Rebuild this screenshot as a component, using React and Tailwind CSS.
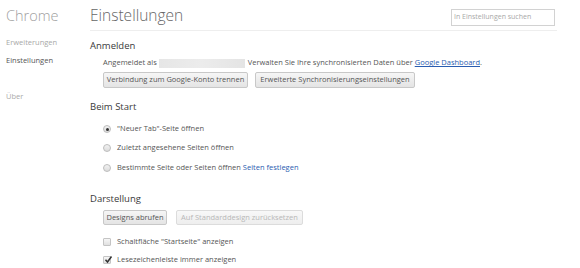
import React from "react";

const font = { fontFamily: '"Open Sans", "Noto Sans", sans-serif' };

function Btn({ children, disabled, className = "" }) {
  return (
    <div
      className={
        "flex items-center justify-center rounded-[2px] border border-[#c8c8c8] bg-gradient-to-b from-[#f6f6f6] to-[#e4e4e4] text-[7.5px] " +
        (disabled ? "text-[#b8b8b8] border-[#dcdcdc] from-[#f8f8f8] to-[#eeeeee] " : "text-[#555] ") +
        className
      }
    >
      {children}
    </div>
  );
}

function Radio({ checked }) {
  return (
    <div className="w-[8px] h-[8px] rounded-full border border-[#bdbdbd] bg-gradient-to-b from-[#f2f2f2] to-[#dcdcdc] flex items-center justify-center">
      {checked && <div className="w-[3px] h-[3px] rounded-full bg-[#333]" />}
    </div>
  );
}

function Check({ checked }) {
  return (
    <div className="relative w-[8px] h-[8px] rounded-[1px] border border-[#c4c4c4] bg-gradient-to-b from-[#f6f6f6] to-[#e0e0e0]">
      {checked && (
        <svg className="absolute left-[0px] top-[-2px]" width="9" height="9" viewBox="0 0 9 9">
          <path d="M1.5 4.8 L3.5 7 L7.5 1.5" fill="none" stroke="#333" strokeWidth="1.5" />
        </svg>
      )}
    </div>
  );
}

export default function App() {
  return (
    <div className="w-[580px] h-[268px] bg-white flex overflow-hidden" style={font}>
      <div className="w-[90px] shrink-0 pl-[6px]">
        <div className="mt-[7px] h-[18px] leading-[18px] text-[14.5px] text-[#a0a0a0] font-light">Chrome</div>
        <div className="mt-[12px] h-[10px] leading-[10px] text-[7.5px] text-[#a8a8a8]">Erweiterungen</div>
        <div className="mt-[8px] h-[10px] leading-[10px] text-[7.5px] text-[#555]">Einstellungen</div>
        <div className="mt-[26px] h-[10px] leading-[10px] text-[7.5px] text-[#aaa]">Über</div>
      </div>
      <div className="flex-1 pr-[23px]">
        <div className="h-[31px] border-b border-[#eeeeee] flex justify-between items-start">
          <div className="mt-[6px] h-[19px] leading-[19px] text-[15.5px] text-[#666] font-light">Einstellungen</div>
          <div className="mt-[9px] mr-[2px] w-[104px] h-[17px] border border-[#d2d2d2] flex items-center pl-[2px] text-[7px] text-[#a8a8a8]">
            In Einstellungen suchen
          </div>
        </div>

        <div className="mt-[9px] h-[12px] leading-[12px] text-[9.5px] text-[#3a3a3a]">Anmelden</div>
        <div className="mt-[6px] h-[10px] pl-[13px] flex items-center text-[7.5px] text-[#555]">
          <span>Angemeldet als</span>
          <div className="ml-[2px] w-[86px] h-[9px] bg-gradient-to-r from-[#e6e6e6] via-[#ececec] to-[#e4e4e4] blur-[0.5px]" />
          <span className="ml-[3px]">
            Verwalten Sie Ihre synchronisierten Daten über{" "}
            <span className="text-[#2a5db0] underline">Google Dashboard</span>.
          </span>
        </div>
        <div className="mt-[4px] h-[16px] pl-[13px] flex gap-[7px]">
          <Btn className="w-[145px] h-[16px]">Verbindung zum Google-Konto trennen</Btn>
          <Btn className="w-[160px] h-[16px]">Erweiterte Synchronisierungseinstellungen</Btn>
        </div>

        <div className="mt-[13px] h-[12px] leading-[12px] text-[9.5px] text-[#3a3a3a]">Beim Start</div>
        <div className="mt-[9px] h-[14px] pl-[13px] flex items-center gap-[6px] text-[7.5px] text-[#555]">
          <Radio checked />
          <span>"Neuer Tab"-Seite öffnen</span>
        </div>
        <div className="mt-[5px] h-[14px] pl-[13px] flex items-center gap-[6px] text-[7.5px] text-[#555]">
          <Radio />
          <span>Zuletzt angesehene Seiten öffnen</span>
        </div>
        <div className="mt-[6px] h-[14px] pl-[13px] flex items-center gap-[6px] text-[7.5px] text-[#555]">
          <Radio />
          <span>
            Bestimmte Seite oder Seiten öffnen <span className="text-[#2a5db0]">Seiten festlegen</span>
          </span>
        </div>

        <div className="mt-[18px] h-[12px] leading-[12px] text-[9.5px] text-[#3a3a3a]">Darstellung</div>
        <div className="mt-[5px] h-[15px] pl-[13px] flex gap-[9px]">
          <Btn className="w-[64px] h-[15px]">Designs abrufen</Btn>
          <Btn disabled className="w-[127px] h-[15px]">Auf Standarddesign zurücksetzen</Btn>
        </div>
        <div className="mt-[10px] h-[14px] pl-[13px] flex items-center gap-[6px] text-[7.5px] text-[#555]">
          <Check />
          <span>Schaltfläche "Startseite" anzeigen</span>
        </div>
        <div className="mt-[4px] h-[14px] pl-[13px] flex items-center gap-[6px] text-[7.5px] text-[#555]">
          <Check checked />
          <span>Lesezeichenleiste immer anzeigen</span>
        </div>
      </div>
    </div>
  );
}
